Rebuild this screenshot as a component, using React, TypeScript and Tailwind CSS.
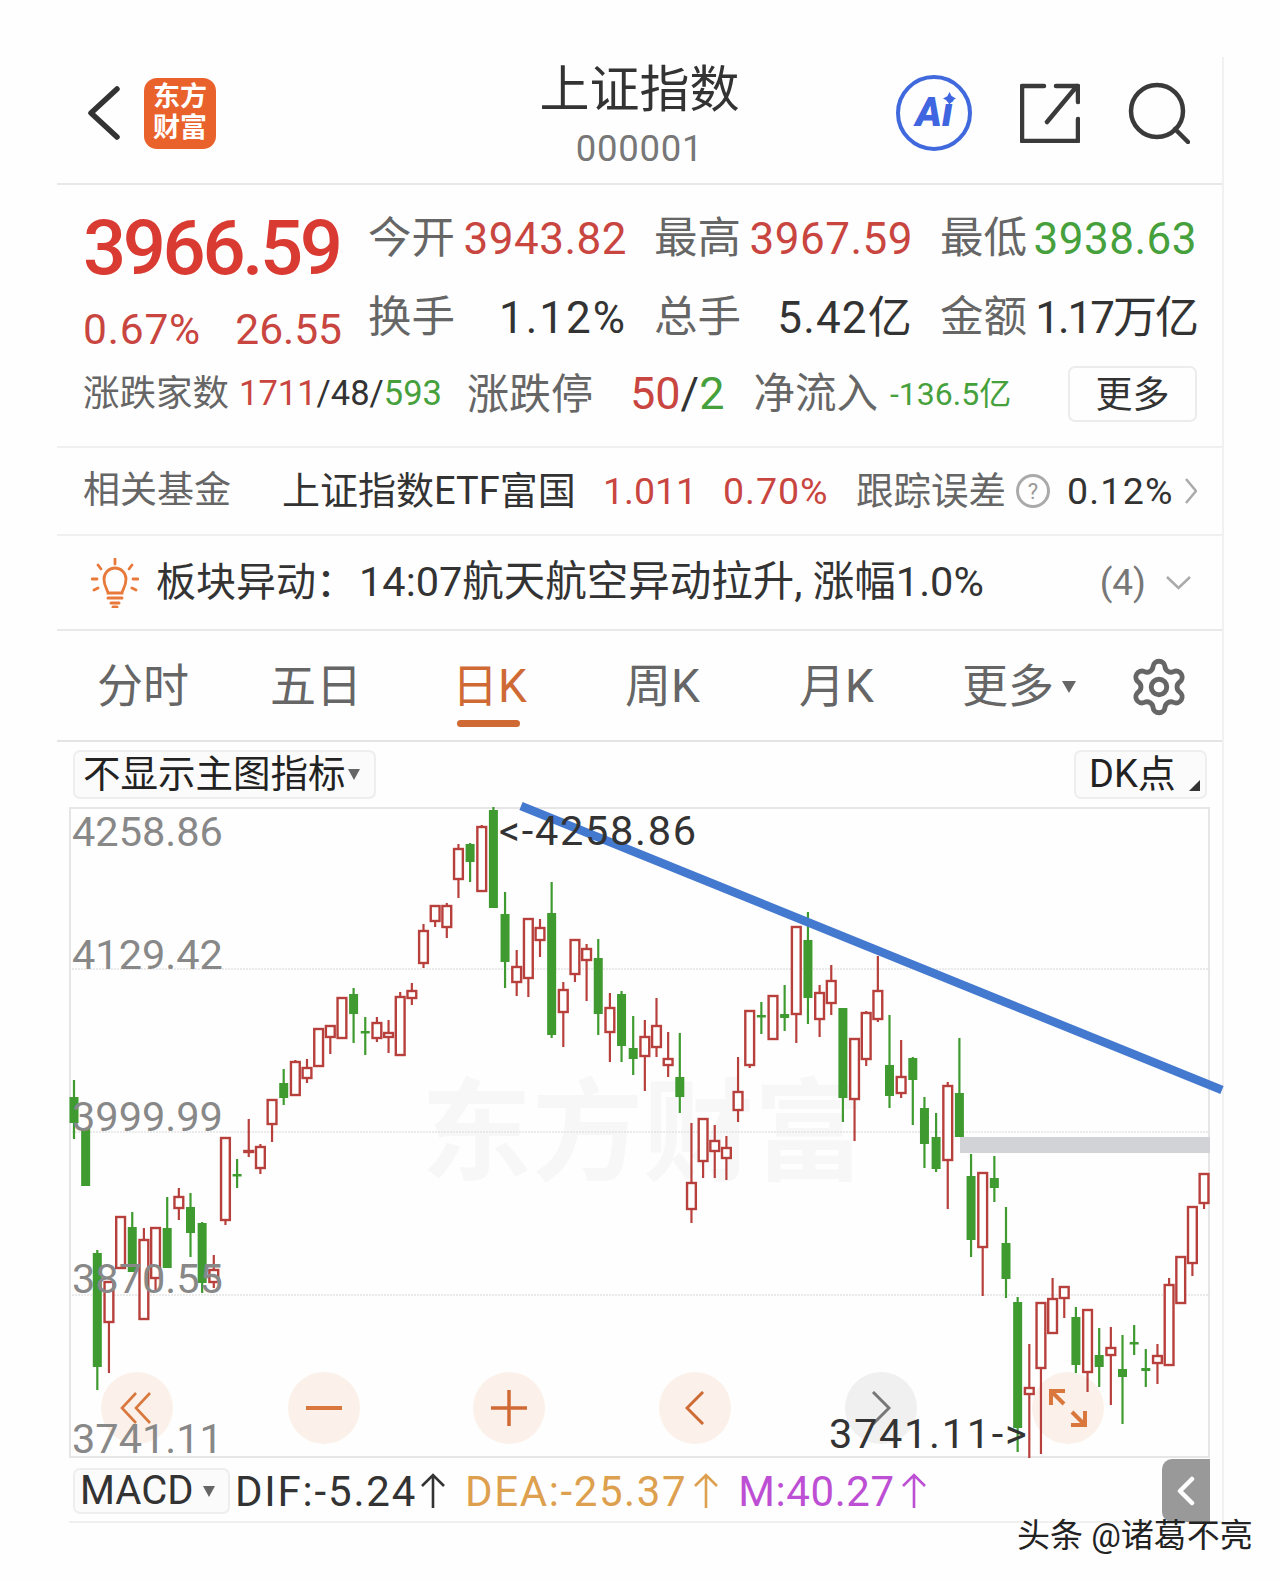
import { Settings } from 'lucide-react'

const FONT = 'font-[Roboto,"Noto_Sans_CJK_SC",sans-serif]'

const GREEN = '#3f9b30'
const RED = '#b8403c'

// [up?, wickTop, wickBottom, bodyTop, bodyBottom], 按页面坐标
const CANDLES: [0 | 1, number, number, number, number][] = [
  [0, 1080, 1139, 1097, 1123], [0, 1128, 1186, 1128, 1186], [0, 1250, 1390, 1253, 1367], [1, 1282, 1373, 1282, 1322],
  [1, 1217, 1268, 1217, 1268], [0, 1212, 1272, 1227, 1272], [1, 1228, 1319, 1240, 1319], [1, 1228, 1292, 1228, 1278],
  [0, 1197, 1268, 1228, 1268], [1, 1188, 1220, 1197, 1208], [0, 1193, 1257, 1207, 1233], [0, 1222, 1293, 1223, 1283],
  [1, 1255, 1288, 1270, 1282], [1, 1138, 1225, 1138, 1220], [0, 1159, 1188, 1174, 1175], [1, 1119, 1157, 1151, 1152],
  [1, 1144, 1174, 1147, 1168], [1, 1100, 1142, 1100, 1124], [0, 1069, 1105, 1083, 1098], [1, 1060, 1095, 1062, 1095],
  [1, 1059, 1083, 1068, 1078], [1, 1029, 1067, 1029, 1066], [1, 1026, 1054, 1026, 1037], [1, 998, 1038, 998, 1038],
  [0, 988, 1043, 994, 1014], [0, 1017, 1055, 1031, 1032], [1, 1017, 1042, 1023, 1038], [1, 1020, 1053, 1033, 1037],
  [1, 992, 1055, 997, 1055], [1, 983, 1005, 991, 998], [1, 924, 968, 931, 963], [1, 906, 927, 906, 921],
  [1, 903, 938, 906, 927], [1, 844, 898, 849, 879], [0, 843, 882, 844, 862], [1, 825, 891, 827, 891],
  [0, 807, 908, 810, 908], [0, 892, 988, 914, 962], [1, 950, 996, 967, 982], [1, 919, 997, 919, 978],
  [1, 919, 957, 928, 940], [0, 882, 1038, 913, 1035], [1, 982, 1047, 990, 1012], [1, 940, 982, 940, 974],
  [1, 944, 1001, 949, 960], [0, 939, 1035, 958, 1014], [1, 993, 1062, 1008, 1032], [0, 991, 1062, 994, 1046],
  [0, 1016, 1075, 1048, 1059], [1, 1020, 1091, 1037, 1056], [1, 998, 1057, 1026, 1047], [1, 1032, 1077, 1059, 1065],
  [0, 1033, 1113, 1077, 1097], [1, 1123, 1223, 1183, 1209], [1, 1119, 1178, 1119, 1161], [1, 1125, 1178, 1141, 1151],
  [1, 1136, 1180, 1148, 1158], [1, 1057, 1122, 1092, 1110], [1, 1011, 1068, 1011, 1065], [0, 1002, 1034, 1015, 1016],
  [1, 996, 1039, 996, 1039], [0, 985, 1031, 1014, 1018], [1, 927, 1043, 927, 1014], [0, 912, 1024, 940, 998],
  [1, 985, 1037, 993, 1019], [1, 965, 1015, 981, 1003], [0, 1008, 1122, 1008, 1098], [1, 1039, 1141, 1039, 1099],
  [1, 1011, 1066, 1013, 1059], [1, 956, 1022, 991, 1019], [0, 1015, 1108, 1065, 1096], [1, 1040, 1098, 1077, 1093],
  [0, 1057, 1125, 1058, 1080], [0, 1097, 1168, 1108, 1144], [0, 1113, 1172, 1137, 1169], [1, 1082, 1209, 1086, 1160],
  [0, 1038, 1137, 1093, 1137], [0, 1154, 1257, 1176, 1240], [1, 1173, 1296, 1173, 1247], [0, 1156, 1202, 1178, 1188],
  [0, 1207, 1298, 1243, 1279], [0, 1297, 1452, 1302, 1428], [1, 1344, 1458, 1388, 1394], [1, 1303, 1454, 1303, 1368],
  [1, 1278, 1333, 1299, 1333], [1, 1286, 1318, 1287, 1298], [0, 1307, 1373, 1317, 1365], [1, 1310, 1392, 1310, 1372],
  [0, 1328, 1387, 1355, 1367], [1, 1327, 1405, 1348, 1355], [0, 1335, 1424, 1369, 1377], [0, 1325, 1355, 1342, 1343],
  [0, 1349, 1387, 1368, 1371], [1, 1344, 1384, 1356, 1363], [1, 1278, 1365, 1285, 1365], [1, 1257, 1303, 1257, 1303],
  [1, 1207, 1276, 1207, 1263], [1, 1174, 1209, 1174, 1203],
]

function CandleChart() {
  return (
    <svg className="absolute left-[-2px] top-[-2px] overflow-visible" width="1141" height="651" viewBox="69 807 1141 651">
      {[969, 1132, 1295].map((y) => (
        <line key={y} x1="69" x2="1210" y1={y} y2={y} stroke="#e4e4e4" strokeWidth="1.5" strokeDasharray="2 1" />
      ))}
      <rect x="960" y="1137" width="250" height="16" fill="#d2d3d6" />
      {CANDLES.map(([up, wt, wb, bt, bb], i) => {
        const x = 74 + i * 11.65
        const color = up ? RED : GREEN
        return (
          <g key={i}>
            <line x1={x} x2={x} y1={wt} y2={wb} stroke={color} strokeWidth="2.2" />
            {up ? (
              <rect x={x - 4.4} y={bt} width="8.8" height={bb - bt} fill="#fff" stroke={color} strokeWidth="2.4" />
            ) : (
              <rect x={x - 4.5} y={bt} width="9" height={Math.max(bb - bt, 2.5)} fill={color} />
            )}
          </g>
        )
      })}
      <line x1="521" y1="806" x2="1222" y2="1090" stroke="#4479d0" strokeWidth="8.5" />
    </svg>
  )
}

function AxisLabel({ top, children }: { top: string; children: string }) {
  return <span className={`absolute left-[1px] text-[41.5px] leading-[48px] text-[#888] ${top}`}>{children}</span>
}

function CircleBtn({ left, grey, children }: { left: string; grey?: boolean; children: React.ReactNode }) {
  return (
    <div className={`absolute top-[563px] w-[72px] h-[72px] rounded-full flex items-center justify-center ${left} ${grey ? 'bg-[#f0f0f0]' : 'bg-[#fbf1ea]'}`}>
      {children}
    </div>
  )
}

function UpArrow({ color }: { color: string }) {
  return (
    <svg width="26" height="36" viewBox="0 0 26 36" fill="none" stroke={color} strokeWidth="2.6">
      <path d="M13 35V2M2 13 13 2l11 11" />
    </svg>
  )
}

export default function App() {
  return (
    <div className={`relative w-[1280px] h-[1581px] overflow-hidden bg-[#fefefe] pt-[57px] pl-[57px] ${FONT}`}>
      <div className="w-[1167px] h-[1466px] border-r-2 border-[#f1f1f1]">
        {/* 顶部导航 */}
        <div className="grid grid-cols-3 h-[128px] border-b-2 border-[#e8e8e8]">
          <div className="flex items-center gap-[24px] pl-[31px] pb-[14px]">
            <svg width="32" height="54" viewBox="0 0 32 54" fill="none" stroke="#333" strokeWidth="5.5" strokeLinecap="round" strokeLinejoin="round">
              <path d="M29 3 3 27l26 24" />
            </svg>
            <div className="w-[72px] h-[71px] rounded-[13px] bg-[#e9622c] flex flex-col items-center justify-center text-white text-[27px] leading-[31px] font-bold">
              <span>东方</span>
              <span>财富</span>
            </div>
          </div>
          <div className="flex flex-col items-center pt-[5px]">
            <span className="text-[50px] leading-[56px] text-[#333]">上证指数</span>
            <span className="mt-[11px] text-[36.5px] leading-[40px] tracking-[0.7px] text-[#777]">000001</span>
          </div>
          <div className="flex items-center justify-end gap-[48px] pr-[32px] pb-[14px]">
            <div className="relative w-[76px] h-[76px] rounded-full border-[4px] border-[#4069dd] flex items-center justify-center text-[#3f66e0] text-[40px] font-black italic leading-none">
              Ai
              <svg className="absolute right-[12px] top-[13px]" width="13" height="13" viewBox="0 0 12 12">
                <path d="M6 0 8 4 12 6 8 8 6 12 4 8 0 6 4 4Z" fill="#3f66e0" />
              </svg>
            </div>
            <svg width="60" height="60" viewBox="0 0 60 60" fill="none" stroke="#3a3a3a" strokeWidth="4.5" strokeLinecap="round" strokeLinejoin="round">
              <path d="M24 3H2v55h56V36M36 3h22v16M57 3 27 39" />
            </svg>
            <svg width="62" height="62" viewBox="0 0 62 62" fill="none" stroke="#3a3a3a" strokeWidth="4.5" strokeLinecap="round">
              <circle cx="29" cy="29" r="26" />
              <path d="m47 47 13 13" />
            </svg>
          </div>
        </div>

        {/* 行情 */}
        <div className="h-[263px] border-b-2 border-[#f0f0f0] pt-[14px]">
          <div className="flex pl-[26px]">
            <div className="w-[285px] shrink-0">
              <div className="mt-[14px] text-[76px] leading-[70px] font-medium tracking-[-3.4px] text-[#d93a32]">3966.59</div>
              <div className="mt-[23px] flex w-[259px] justify-between text-[42.5px] leading-[48px] text-[#c9453f]">
                <span className="tracking-[0.8px]">0.67%</span>
                <span>26.55</span>
              </div>
            </div>
            <div className="grid grid-cols-[259px_259px_257px] gap-x-[27px] w-[829px]">
              {[
                ['今开', '3943.82', 'text-[#c9453f] tracking-[0.5px]'],
                ['最高', '3967.59', 'text-[#c9453f] tracking-[0.5px]'],
                ['最低', '3938.63', 'text-[#46a03c] tracking-[0.5px]'],
                ['换手', '1.12%', 'text-[#333] tracking-[2px]'],
                ['总手', '5.42亿', 'text-[#333] tracking-[1.2px]'],
                ['金额', '1.17万亿', 'text-[#333] tracking-[-2px]'],
              ].map(([label, value, color]) => (
                <div key={label} className="flex h-[79px] items-center justify-between whitespace-nowrap">
                  <span className="text-[43.5px] text-[#666]">{label}</span>
                  <span className={`text-[44px] ${color}`}>{value}</span>
                </div>
              ))}
            </div>
          </div>
          <div className="flex h-[74px] items-center pl-[26px] pr-[25px] whitespace-nowrap">
            <span className="text-[36.5px] text-[#666]">涨跌家数</span>
            <span className="ml-[10px] text-[34.5px] text-[#333]">
              <span className="text-[#c9453f]">1711</span>/48/<span className="text-[#46a03c]">593</span>
            </span>
            <span className="ml-[25px] text-[42px] text-[#666]">涨跌停</span>
            <span className="ml-[37px] text-[45px] text-[#333]">
              <span className="text-[#c9453f]">50</span>/<span className="text-[#46a03c]">2</span>
            </span>
            <span className="ml-[29px] text-[41.5px] text-[#666]">净流入</span>
            <span className="ml-[12px] text-[32px] text-[#46a03c]">-136.5亿</span>
            <button className="ml-auto w-[129px] h-[56px] rounded-[7px] border-2 border-[#ececec] text-[37px] text-[#333]">更多</button>
          </div>
        </div>

        {/* 相关基金 */}
        <div className="flex items-center h-[88px] border-b-2 border-[#f0f0f0] pl-[26px] pr-[25px] whitespace-nowrap">
          <span className="w-[199px] text-[37px] text-[#666]">相关基金</span>
          <span className="w-[321px] text-[38px] text-[#333]">上证指数ETF富国</span>
          <span className="w-[120px] text-[37.5px] text-[#c9453f]">1.011</span>
          <span className="w-[133px] text-[37.5px] tracking-[1px] text-[#c9453f]">0.70%</span>
          <span className="text-[37.5px] text-[#666]">跟踪误差</span>
          <span className="ml-[10px] w-[34px] h-[34px] rounded-full border-[3px] border-[#aaa] flex items-center justify-center text-[22px] text-[#999]">?</span>
          <span className="ml-[17px] text-[37.5px] tracking-[1.2px] text-[#333]">0.12%</span>
          <svg className="ml-auto" width="12" height="26" viewBox="0 0 12 26" fill="none" stroke="#aaa" strokeWidth="2.5">
            <path d="m1 1 10 12L1 25" />
          </svg>
        </div>

        {/* 板块异动 */}
        <div className="flex items-center h-[95px] border-b-2 border-[#e8e8e8] pl-[34px] pr-[31px] whitespace-nowrap">
          <svg width="48" height="50" viewBox="0 0 48 50" fill="none" stroke="#e8793a" strokeWidth="2.8" strokeLinecap="round">
            <path d="M24 1v5M7 7l3 4M41 7l-3 4M1 21h5M42 21h5M3 32l4-2M45 32l-4-2" />
            <path d="M17 35c0-3-4-6-4-14a11 11 0 0 1 22 0c0 8-4 11-4 14Z" />
            <path d="M17 40h14M20 45h8M22 49h4" strokeWidth="3" />
          </svg>
          <span className="ml-[17px] text-[40px] text-[#333]">板块异动：</span>
          <span className="ml-[3px] text-[41.5px] text-[#333]">14:07航天航空异动拉升, 涨幅1.0%</span>
          <span className="ml-auto text-[37px] text-[#777]">(4)</span>
          <svg className="ml-[20px]" width="25" height="14" viewBox="0 0 25 14" fill="none" stroke="#aaa" strokeWidth="2.5">
            <path d="m1 1 11.5 11L24 1" />
          </svg>
        </div>

        {/* 周期 tab */}
        <div className="flex items-center h-[111px] border-b-2 border-[#e4e4e4] pl-[40px] pr-[32px] pt-[2px]">
          <span className="w-[173px] text-[46px] text-[#666]">分时</span>
          <span className="w-[186px] text-[46px] text-[#666]">五日</span>
          <div className="relative w-[169px] text-[46px] text-[#cf6a35]">
            <span className="-ml-[4px]">日K</span>
            <div className="absolute left-[1px] top-[68px] w-[63px] h-[7px] rounded-full bg-[#cf6a35]"></div>
          </div>
          <span className="w-[174px] text-[46px] text-[#666]">周K</span>
          <span className="w-[163px] text-[46px] text-[#666]">月K</span>
          <span className="text-[46px] text-[#666]">更多</span>
          <span className="ml-[8px] w-0 h-0 border-x-[7px] border-x-transparent border-t-[12px] border-t-[#666]"></span>
          <Settings className="ml-auto" size={62} color="#666" strokeWidth={1.9} />
        </div>

        {/* 主图指标 */}
        <div className="flex items-start pt-[8px] h-[65px] pl-[16px] pr-[15px]">
          <div className="flex items-center w-[303px] h-[49px] rounded-[7px] border-2 border-[#eeeeee] bg-[#fbfbfb] pl-[8px] text-[37.5px] text-[#222] whitespace-nowrap">
            不显示主图指标
            <span className="ml-[2px] w-0 h-0 border-x-[6px] border-x-transparent border-t-[11px] border-t-[#666]"></span>
          </div>
          <div className="relative ml-auto flex items-center w-[133px] h-[49px] rounded-[7px] border-2 border-[#eeeeee] bg-[#fbfbfb] pl-[13px] text-[38px] text-[#222]">
            DK点
            <span className="absolute right-[5px] bottom-[6px] w-0 h-0 border-l-[11px] border-l-transparent border-b-[11px] border-b-[#333]"></span>
          </div>
        </div>

        {/* K线图 */}
        <div className="relative ml-[12px] w-[1141px] h-[651px] border-2 border-[#e6e6e6]">
          <div className="absolute left-[350px] top-[262px] text-[111px] leading-[126px] font-bold text-[#f7f7f7] whitespace-nowrap">东方财富</div>
          <CircleBtn left="left-[30px]">
            <svg width="34" height="32" viewBox="0 0 34 32" fill="none" stroke="#d9773c" strokeWidth="2.6">
              <path d="M16 1 2 16l14 15M30 1 16 16l14 15" />
            </svg>
          </CircleBtn>
          <CircleBtn left="left-[217px]">
            <div className="w-[36px] h-[4px] bg-[#d9773c]"></div>
          </CircleBtn>
          <CircleBtn left="left-[402px]">
            <svg width="36" height="36" viewBox="0 0 36 36" fill="none" stroke="#cf6a35" strokeWidth="3.5">
              <path d="M18 0v36M0 18h36" />
            </svg>
          </CircleBtn>
          <CircleBtn left="left-[588px]">
            <svg width="20" height="34" viewBox="0 0 20 34" fill="none" stroke="#cf6a35" strokeWidth="3">
              <path d="M18 1 2 17l16 16" />
            </svg>
          </CircleBtn>
          <CircleBtn left="left-[774px]" grey>
            <svg width="20" height="34" viewBox="0 0 20 34" fill="none" stroke="#777" strokeWidth="3">
              <path d="m2 1 16 16L2 33" />
            </svg>
          </CircleBtn>
          <CircleBtn left="left-[961px]">
            <svg width="38" height="38" viewBox="0 0 38 38" fill="none" stroke="#d9773c" strokeWidth="4">
              <path d="M2 16V2h14M2 2l13 13M36 22v14H22M36 36 23 23" />
            </svg>
          </CircleBtn>

          <CandleChart />

          <AxisLabel top="top-[-1px]">4258.86</AxisLabel>
          <AxisLabel top="top-[122px]">4129.42</AxisLabel>
          <AxisLabel top="top-[284px]">3999.99</AxisLabel>
          <AxisLabel top="top-[446px]">3870.55</AxisLabel>
          <AxisLabel top="top-[606px]">3741.11</AxisLabel>
          <span className="absolute left-[428px] top-[-2px] text-[41.5px] leading-[48px] tracking-[1.7px] text-[#333]">&lt;-4258.86</span>
          <span className="absolute left-[758px] top-[601px] text-[41.5px] leading-[48px] tracking-[1.7px] text-[#333]">3741.11-&gt;</span>
        </div>

        {/* 副图指标 */}
        <div className="relative flex items-center h-[66px] pl-[16px] whitespace-nowrap">
          <div className="flex items-center w-[157px] h-[46px] rounded-[7px] border-2 border-[#eeeeee] bg-[#fbfbfb] pl-[5px] text-[40px] text-[#333]">
            MACD
            <span className="ml-[10px] w-0 h-0 border-x-[6px] border-x-transparent border-t-[11px] border-t-[#666]"></span>
          </div>
          <span className="ml-[5px] text-[42px] tracking-[1.8px] text-[#333]">DIF:-5.24</span>
          <span className="ml-[3px]"><UpArrow color="#333" /></span>
          <span className="ml-[19px] text-[42px] tracking-[1.6px] text-[#dda04e]">DEA:-25.37</span>
          <span className="ml-[6px]"><UpArrow color="#dda04e" /></span>
          <span className="ml-[19px] text-[42px] tracking-[0.6px] text-[#bd4fd4]">M:40.27</span>
          <span className="ml-[6px]"><UpArrow color="#bd4fd4" /></span>
          <div className="absolute right-[12px] top-[1px] w-[48px] h-[63px] rounded-l-[10px] bg-[#999] flex items-center justify-center">
            <svg width="18" height="30" viewBox="0 0 18 30" fill="none" stroke="#fff" strokeWidth="4.5" strokeLinecap="round" strokeLinejoin="round">
              <path d="M15 3 3 15l12 12" />
            </svg>
          </div>
        </div>
      </div>
      <div className="ml-[12px] w-[1155px] -mt-[2px] border-t-2 border-[#f0f0f0]"></div>

      {/* 水印 */}
      <div className="absolute left-[1017px] top-[1516px] text-[33px] leading-[40px] text-[#222] whitespace-nowrap">头条 @诸葛不亮</div>
    </div>
  )
}
